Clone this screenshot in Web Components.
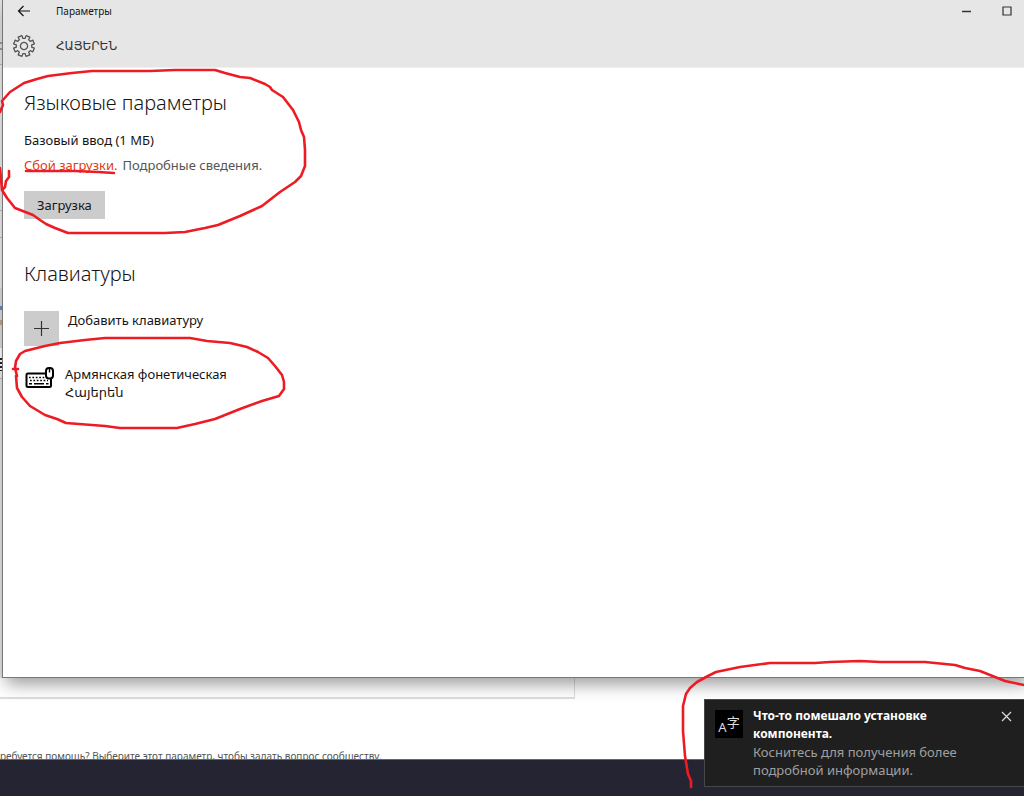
<!DOCTYPE html>
<html lang="ru">
<head>
<meta charset="utf-8">
<meta name="viewport" content="width=device-width, initial-scale=1">
<title>Параметры</title>
<style>
  body { margin: 0; background: #fff; font: 14px/18px "Noto Sans", "Open Sans", "DejaVu Sans", sans-serif; color: #151515; }
</style>
</head>
<body>
<desktop-shell>
  <settings-window slot="window" heading="ՀԱՅԵՐԵՆ" caption="Параметры">
    <settings-section heading="Языковые параметры">
      <language-feature name="Базовый ввод (1 МБ)" error="Сбой загрузки." details="Подробные сведения." action="Загрузка"></language-feature>
    </settings-section>
    <settings-section heading="Клавиатуры">
      <add-keyboard>Добавить клавиатуру</add-keyboard>
      <keyboard-item name="Армянская фонетическая" layout="Հայերեն"></keyboard-item>
    </settings-section>
    <pen-marks slot="marks"></pen-marks>
  </settings-window>
  <page-behind slot="page">ребуется помощь? Выберите этот параметр, чтобы задать вопрос сообществу.</page-behind>
  <toast-notice slot="toast">
    <span slot="title">Что-то помешало установке компонента.</span>
    <span slot="body">Коснитесь для получения более подробной информации.</span>
  </toast-notice>
</desktop-shell>
<script>
function define(name, html) {
  const tpl = document.createElement('template');
  tpl.innerHTML = html;
  customElements.define(name, class extends HTMLElement {
    constructor() {
      super();
      this.attachShadow({ mode: 'open' }).append(tpl.content.cloneNode(true));
    }
    connectedCallback() {
      this.shadowRoot.querySelectorAll('[data-attr]').forEach(el => {
        el.textContent = this.getAttribute(el.dataset.attr);
      });
    }
  });
}

define('desktop-shell', `
<style>
  :host { display: flex; flex-direction: column; min-height: 100vh; position: relative; overflow: hidden; }
  .work { flex: 1; display: flex; padding-left: 2px;
    background: linear-gradient(#e4e4e4 0 42px, #8aa0b4 42px 44px, #e4e4e4 44px 48px, #8aa0b4 48px 50px, #e9e9e9 50px 64px, #bbb 64px 65px, #eee 65px 210px, #bbb 210px 211px, #eee 211px 237px, #bbb 237px 238px, #eee 238px 288px, #ddd 288px 306px, #6d86d8 306px 310px, #ddd 310px 320px, #c9a880 320px 325px, #ddd 325px 348px, #fff 348px 358px, #222 358px 360px, #fff 360px 362px, #222 362px 364px, #fff 364px 366px, #222 366px 368px, #fff 368px 370px, #222 370px 371px, #eee 371px 378px, #bbb 378px 379px, #e6e6e6 379px); }
  .taskbar { height: 36px; background: #252432; border-top: 1px solid #5c6b70; }
  .toast { position: absolute; right: 0; bottom: 9px; z-index: 3; }
</style>
<div class="work"><slot name="window"></slot></div>
<slot name="page"></slot>
<div class="taskbar"></div>
<div class="toast"><slot name="toast"></slot></div>`);

define('settings-window', `
<style>
  :host { flex: 1; display: flex; flex-direction: column; position: relative; z-index: 1; box-sizing: border-box; background: #fff; border: solid #777; border-width: 0 0 1px 1px; box-shadow: 4px 6px 16px rgba(0,0,0,.4); }
  header { background: #e6e6e6; border-bottom: 1px solid #f0f0f0; }
  .bar { display: flex; align-items: center; height: 22px; font-size: 10px; }
  .bar .caption { flex: 1; padding-left: 25px; }
  button { border: 0; padding: 0; background: none; display: flex; color: inherit; }
  .back { margin-left: 14px; }
  .min { margin-right: 30px; }
  .max { margin-right: 12px; }
  .title { display: flex; align-items: center; gap: 20px; height: 47px; margin-bottom: -2px; padding-left: 9px; }
  h1 { margin: 0; font: 12px/18px "DejaVu Sans", sans-serif; color: #333; }
  main { padding: 22px 21px; display: flex; flex-direction: column; gap: 42px; }
</style>
<header>
  <div class="bar">
    <button class="back" aria-label="Назад"><svg width="14" height="12" viewBox="0 0 14 12" fill="none" stroke="#111" stroke-width="1.2"><path d="M1.5 6H13M6.5 1 1.5 6l5 5"/></svg></button>
    <span class="caption" data-attr="caption"></span>
    <button class="min" aria-label="Свернуть"><svg width="11" height="11"><path d="M1 5.5h9" stroke="#333" stroke-width="1.5"/></svg></button>
    <button class="max" aria-label="Развернуть"><svg width="10" height="10"><path d="M1 1h8v8H1z" fill="none" stroke="#333" stroke-width="1.2"/></svg></button>
  </div>
  <div class="title">
    <svg width="24" height="24" viewBox="-12 -12 24 24" fill="none" stroke="#555" stroke-width="1.3" stroke-linejoin="round"><circle r="3.6"/><path id="gear"/></svg>
    <h1 data-attr="heading"></h1>
  </div>
</header>
<main><slot></slot></main>
<slot name="marks"></slot>`);

define('settings-section', `
<style>
  :host { display: block; }
  h2 { margin: 0 0 15px; font-weight: 300; font-size: 20px; line-height: 26px; }
</style>
<section><h2 data-attr="heading"></h2><slot></slot></section>`);

define('language-feature', `
<style>
  :host { display: block; font-size: 13px; }
  p { margin: 0 0 7px; }
  .status { display: flex; gap: 5px; margin-bottom: 17px; color: #e03c14; }
  a { color: #555; text-decoration: none; }
  button { border: 0; padding: 0 13px; height: 28px; background: #ccc; font: inherit; color: #151515; display: block; }
</style>
<p data-attr="name"></p>
<p class="status"><span data-attr="error"></span><a href="#details" data-attr="details"></a></p>
<button data-attr="action"></button>`);

define('add-keyboard', `
<style>
  :host { display: block; font-size: 13px; padding-top: 9px; }
  button { display: flex; align-items: flex-start; gap: 9px; border: 0; padding: 0; background: none; font: inherit; color: inherit; }
  .tile { width: 35px; height: 35px; background: #ccc; display: grid; place-items: center; }
</style>
<button><span class="tile"><svg width="15" height="15"><path d="M0 7.5h15M7.5 0v15" stroke="#333" stroke-width="1.2"/></svg></span><slot></slot></button>`);

define('keyboard-item', `
<style>
  :host { display: flex; gap: 10px; font-size: 13px; padding-top: 19px; }
  svg { margin: 1px 0 0 1px; flex: none; }
</style>
<svg width="30" height="26" viewBox="0 0 30 26" fill="none" stroke="#000" stroke-width="2">
  <path d="M20 7.500H3Q1.500 7.500 1.500 9v10.500Q1.500 21 3 21h21.500Q26 21 26 19.500V13"/>
  <path d="M4 11.500h16M5 14.500h18" stroke-dasharray="1.700 1.700" stroke-width="1.600"/>
  <path d="M4 17.800h3M9 17.800h10M21 17.800h2.500" stroke-width="1.600"/>
  <rect x="21" y="2" width="7" height="10.500" rx="3"/><path d="M24.500 2v4.500" stroke-width="1.400"/>
</svg>
<div><div data-attr="name"></div><div data-attr="layout"></div></div>`);

define('page-behind', `
<style>
  :host { display: flex; flex-direction: column; justify-content: space-between; height: 81px; background: #fff; overflow: hidden; position: relative; }
  .frame { width: 574px; height: 19px; border: solid #ddd; border-width: 0 1px 2px 0; }
  p { margin: 0; height: 11px; font-size: 10px; line-height: 16px; color: #555; white-space: nowrap; }
</style>
<div class="frame"></div><p><slot></slot></p>`);

define('toast-notice', `
<style>
  :host { display: block; position: relative; width: 320px; font-size: 13px; }
  .box { display: flex; gap: 10px; box-sizing: border-box; min-height: 88px; padding: 7px 12px 7px 10px; background: #1f1f1f; border: solid #484848; border-width: 1px 0 1px 1px; }
  .icon { flex: none; margin-top: 3px; width: 28px; height: 28px; background: #000; color: #ddd; display: flex; justify-content: center; align-items: center; font-size: 13px; line-height: 20px; }
  .icon b { font-weight: 400; padding-top: 6px; }
  .icon i { font: 13px/18px "Noto Sans CJK SC", sans-serif; padding-bottom: 5px; }
  .text { flex: 1; }
  .head { font-weight: 700; font-size: 12px; color: #fff; max-width: 200px; }
  .body { color: #a0a0a0; }
  button { align-self: flex-start; border: 0; padding: 0; margin-top: 4px; background: none; display: flex; }
  .mark { position: absolute; left: -24px; top: -42px; pointer-events: none; }
</style>
<div class="box">
  <div class="icon"><b>A</b><i>字</i></div>
  <div class="text"><div class="head"><slot name="title"></slot></div><div class="body"><slot name="body"></slot></div></div>
  <button aria-label="Закрыть"><svg width="11" height="11"><path d="M1 1l9 9M10 1l-9 9" stroke="#ddd" stroke-width="1.2"/></svg></button>
</div>
<svg class="mark" width="344" height="134" viewBox="680 656 344 134" fill="none" stroke="#ed1c24" stroke-width="2.600" stroke-linejoin="round" stroke-linecap="round"><path d="M691 786L691 780 688 773 685 755 683 730 683 705 686 693 690 687 697 681 706 676 716 671 740 666 770 662 815 662 830 661 860 660 880 661 925 661 955 664 965 667 980 670 1005 680 1024 684"/></svg>`);

define('pen-marks', `
<style>
  :host { position: absolute; left: -3px; top: 0; pointer-events: none; }
  svg { display: block; }
</style>
<svg width="320" height="440" fill="none" stroke="#ed1c24" stroke-width="2.600" stroke-linejoin="round" stroke-linecap="round">
  <path d="M0 112L3 105 2 101 10 92 24 83 37 79 48 76 72 73 92 71 150 71 175 70 215 70 225 73 240 77 250 78 265 84 270 87 272 90 283 97 293 110 299 122 301 130 304 137 305 150 305 166 301 176 295 182 280 192 262 206 240 216 218 225 205 228 185 232 165 233 68 233 55 228 46 224 40 220 33 215 15 208 7 198 2 190 0 168M9 171L9 177 6 181 5 187 2 190"/>
  <path d="M26 171L75 171 98 172 114 173"/>
  <path d="M13 369L18 369M17 376L15 368 16 361 20 354 25 351 45 346 60 343 85 340 105 338 190 338 207 341 230 343 247 347 258 352 268 358 275 366 282 375 284 382 284 389 279 396 262 401 240 409 215 419 195 424 177 428 120 428 105 426 66 423 57 419 45 415 30 406 22 397 17 388 16 376"/>
</svg>`);

/* Eight-toothed gear outline around the origin. */
const gear = document.querySelector('settings-window').shadowRoot.getElementById('gear');
let d = '';
for (let i = 0; i < 8; i++) {
  [[7.8, -14], [10.6, -11], [10.6, 11], [7.8, 14]].forEach(([r, o]) => {
    const t = (i * 45 + 22.5 + o) * Math.PI / 180;
    d += (d ? 'L' : 'M') + (r * Math.cos(t)).toFixed(2) + ' ' + (r * Math.sin(t)).toFixed(2);
  });
}
gear.setAttribute('d', d + 'Z');
</script>
</body>
</html>
